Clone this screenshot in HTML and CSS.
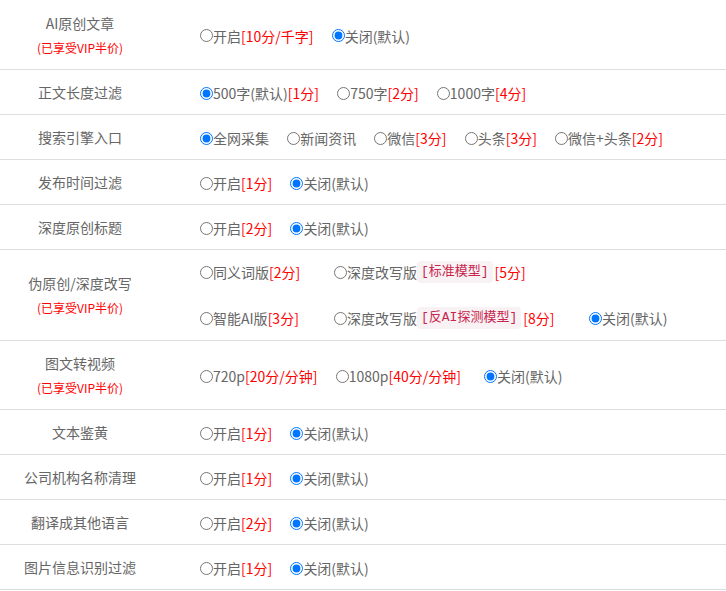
FILE: index.html
```html
<!DOCTYPE html>
<html lang="zh-CN">
<head>
  <meta charset="UTF-8">
  <title>采集设置</title>
  <link rel="stylesheet" href="styles.css">
</head>
<body>

<table class="opts">
  <tr class="tall first">
    <td class="name">AI原创文章<div class="vip">(已享受VIP半价)</div></td>
    <td class="val">
      <label class="opt"><input type="radio" name="ai">开启<span class="price">[10分/千字]</span></label>
      <label class="opt"><input type="radio" name="ai" checked>关闭(默认)</label>
    </td>
  </tr>
  <tr>
    <td class="name">正文长度过滤</td>
    <td class="val">
      <label class="opt"><input type="radio" name="len" checked>500字(默认)<span class="price">[1分]</span></label>
      <label class="opt"><input type="radio" name="len">750字<span class="price">[2分]</span></label>
      <label class="opt"><input type="radio" name="len">1000字<span class="price">[4分]</span></label>
    </td>
  </tr>
  <tr>
    <td class="name">搜索引擎入口</td>
    <td class="val">
      <label class="opt"><input type="radio" name="src" checked>全网采集</label>
      <label class="opt"><input type="radio" name="src">新闻资讯</label>
      <label class="opt"><input type="radio" name="src">微信<span class="price">[3分]</span></label>
      <label class="opt"><input type="radio" name="src">头条<span class="price">[3分]</span></label>
      <label class="opt"><input type="radio" name="src">微信+头条<span class="price">[2分]</span></label>
    </td>
  </tr>
  <tr>
    <td class="name">发布时间过滤</td>
    <td class="val">
      <label class="opt"><input type="radio" name="time">开启<span class="price">[1分]</span></label>
      <label class="opt"><input type="radio" name="time" checked>关闭(默认)</label>
    </td>
  </tr>
  <tr>
    <td class="name">深度原创标题</td>
    <td class="val">
      <label class="opt"><input type="radio" name="title">开启<span class="price">[2分]</span></label>
      <label class="opt"><input type="radio" name="title" checked>关闭(默认)</label>
    </td>
  </tr>
  <tr class="double">
    <td class="name">伪原创/深度改写<div class="vip">(已享受VIP半价)</div></td>
    <td class="val">
      <div class="grid">
        <label class="opt"><input type="radio" name="rw">同义词版<span class="price">[2分]</span></label>
        <label class="opt"><input type="radio" name="rw">深度改写版<code>[标准模型]</code><span class="price">[5分]</span></label>
        <span></span>
        <label class="opt"><input type="radio" name="rw">智能AI版<span class="price">[3分]</span></label>
        <label class="opt"><input type="radio" name="rw">深度改写版<code>[反AI探测模型]</code><span class="price">[8分]</span></label>
        <label class="opt"><input type="radio" name="rw" checked>关闭(默认)</label>
      </div>
    </td>
  </tr>
  <tr class="tall">
    <td class="name">图文转视频<div class="vip">(已享受VIP半价)</div></td>
    <td class="val">
      <label class="opt"><input type="radio" name="video">720p<span class="price">[20分/分钟]</span></label>
      <label class="opt wide"><input type="radio" name="video">1080p<span class="price">[40分/分钟]</span></label>
      <label class="opt"><input type="radio" name="video" checked>关闭(默认)</label>
    </td>
  </tr>
  <tr>
    <td class="name">文本鉴黄</td>
    <td class="val">
      <label class="opt"><input type="radio" name="porn">开启<span class="price">[1分]</span></label>
      <label class="opt"><input type="radio" name="porn" checked>关闭(默认)</label>
    </td>
  </tr>
  <tr>
    <td class="name">公司机构名称清理</td>
    <td class="val">
      <label class="opt"><input type="radio" name="corp">开启<span class="price">[1分]</span></label>
      <label class="opt"><input type="radio" name="corp" checked>关闭(默认)</label>
    </td>
  </tr>
  <tr>
    <td class="name">翻译成其他语言</td>
    <td class="val">
      <label class="opt"><input type="radio" name="trans">开启<span class="price">[2分]</span></label>
      <label class="opt"><input type="radio" name="trans" checked>关闭(默认)</label>
    </td>
  </tr>
  <tr>
    <td class="name">图片信息识别过滤</td>
    <td class="val">
      <label class="opt"><input type="radio" name="img">开启<span class="price">[1分]</span></label>
      <label class="opt"><input type="radio" name="img" checked>关闭(默认)</label>
    </td>
  </tr>
</table>

</body>
</html>
```

FILE: styles.css
```css
body {
  margin: 0;
  font-family: "Noto Sans CJK SC", "Noto Sans", sans-serif;
  font-size: 14px;
  color: #666;
  background: white;
}
.opts {
  width: 100%;
  border-collapse: collapse;
}
.opts td {
  border-bottom: 1px solid #ddd;
  padding: 0;
  height: 44px;
  line-height: 20px;
  vertical-align: middle;
}
.opts tr.tall td { height: 68px; }
.opts tr.first td { height: 69px; }
.opts tr.double td { height: 90px; }
.opts td.name {
  width: 160px;
  text-align: center;
}
.opts td.val {
  padding-left: 40px;
}
.vip {
  color: red;
  font-size: 12px;
  line-height: 19px;
  margin-top: 5px;
}
.opt {
  display: inline-flex;
  align-items: center;
  height: 20px;
  margin-right: 15px;
  white-space: nowrap;
  vertical-align: middle;
}
.opt.wide { margin-right: 20px; }
.opt input {
  margin: 0;
  width: 13px;
  height: 13px;
}
.price { color: red; }
code {
  font-family: "Liberation Mono", "Noto Sans CJK SC", monospace;
  font-size: 13px;
  line-height: 18px;
  color: #c7254e;
  background: #f9f2f4;
  padding: 2px 4px;
  border-radius: 4px;
  margin-right: 2px;
}
.grid {
  display: grid;
  grid-template-columns: 134px 255px auto;
  row-gap: 26px;
}
.grid .opt { margin-right: 0; }
```
